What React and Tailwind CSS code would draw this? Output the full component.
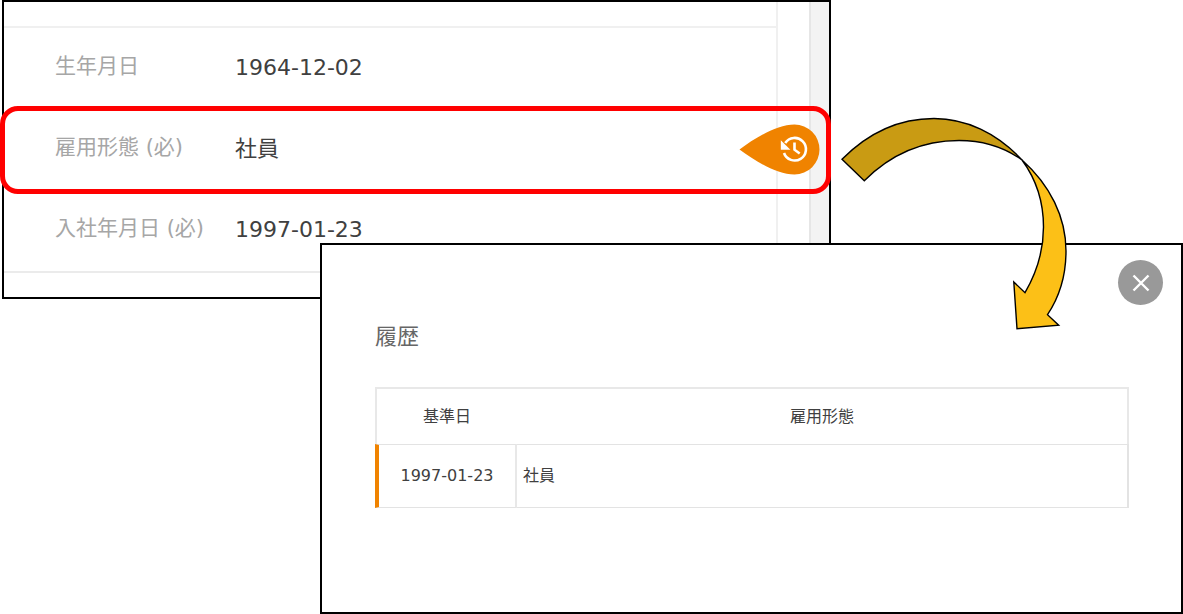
import React from 'react';

const profileRows = [
  { label: '生年月日', value: '1964-12-02' },
  { label: '雇用形態 (必)', value: '社員' },
  { label: '入社年月日 (必)', value: '1997-01-23' },
];

const historyRows = [{ date: '1997-01-23', type: '社員' }];

const HistoryPin = () => (
  <button
    type="button"
    aria-label="履歴を表示"
    className="absolute right-[9px] top-[122px] cursor-pointer"
  >
    <svg width="81" height="51" viewBox="0 0 81 51" fill="none">
      <path
        d="M.5 25.5C16 14 38 .5 55.5 .5a25 25 0 0 1 0 50C38 50.5 16 37 .5 25.5z"
        fill="#f08300"
      />
      <path d="M46.2 19a11.3 11.3 0 1 1-1.2 10" stroke="#fff" strokeWidth="2.6" />
      <path d="M41.8 16.2v9.6h9.6z" fill="#fff" />
      <path d="M55.5 18.5v7.2l5.2 3.8" stroke="#fff" strokeWidth="2.6" />
    </svg>
  </button>
);

const Profile = () => (
  <section className="relative ml-[2px] mr-[352px] flex border-2 border-black bg-white">
    <div className="flex-1 border-r-2 border-[#f0f0f0]">
      <div className="h-[26px] border-b-2 border-[#f0f0f0]" />
      <dl className="border-b-2 border-[#ebebeb]">
        {profileRows.map((row) => (
          <div key={row.label} className="flex h-[81px] items-center pb-[3px] pl-[51px]">
            <dt className="w-[180px] text-[21px] text-[#a6a6a6]">{row.label}</dt>
            <dd className="text-[22px] text-[#404040]">{row.value}</dd>
          </div>
        ))}
      </dl>
      <div className="h-6" />
    </div>
    <div className="ml-[31px] w-5 border-l-2 border-[#e6e6e6] bg-[#f3f3f3]" />

    {/* highlighted row */}
    <div className="absolute -left-[4px] -right-[2px] top-[104px] h-[88px] rounded-[18px] border-[5px] border-[#ff0000]" />
    <HistoryPin />
  </section>
);

const HistoryDialog = () => (
  <section
    role="dialog"
    aria-labelledby="history-title"
    className="relative -mt-14 ml-80 border-2 border-black bg-white pb-[104px]"
  >
    <div className="flex justify-end pr-[18px] pt-[15px]">
      <button
        type="button"
        aria-label="閉じる"
        className="flex h-[45px] w-[45px] cursor-pointer items-center justify-center rounded-full bg-[#999]"
      >
        <svg width="18" height="18" viewBox="0 0 18 18" stroke="#fff" strokeWidth="2.4">
          <path d="M1.5 1.5l15 15M16.5 1.5l-15 15" />
        </svg>
      </button>
    </div>
    <div className="pl-[53px] pr-[52px] pt-4">
      <h2 id="history-title" className="text-[22px] leading-8 text-[#666]">
        履歴
      </h2>
      <table className="mt-[34px] w-full table-fixed border-separate border-spacing-0 text-[16px] text-[#404040]">
        <thead>
          <tr className="h-[57px]">
            <th className="w-[142px] border-l-2 border-t-2 border-[#e8e8e8] font-normal">
              基準日
            </th>
            <th className="border-r-2 border-t-2 border-[#e8e8e8] font-normal">雇用形態</th>
          </tr>
        </thead>
        <tbody>
          {historyRows.map((row) => (
            <tr key={row.date} className="h-16">
              <td className="border-y border-l-4 border-r-2 border-y-[#e3e3e3] border-l-[#f08300] border-r-[#e8e8e8] text-center">
                {row.date}
              </td>
              <td className="border-y border-r-2 border-[#e3e3e3] pl-[6px]">{row.type}</td>
            </tr>
          ))}
        </tbody>
      </table>
    </div>
  </section>
);

const CurvedArrow = () => (
  <svg
    className="pointer-events-none absolute right-[111px] top-[112px]"
    width="236"
    height="224"
    viewBox="836 112 236 224"
    stroke="#000"
    strokeWidth="1.4"
  >
    <path
      d="M842 159.3C868 133 900 118.5 934 118.5C966 118.5 997 133 1022 160C1004 147 983 140.5 959 140.5C924 140.5 891 154 864.3 180.7z"
      fill="#c99b13"
    />
    <path
      d="M1022 160C1050 185 1066 217 1066 251C1066 274 1060 296 1047.5 314.7L1058.7 325.3L1017 328.7L1013.8 282L1025 292.7C1037 272 1043.5 250 1043.5 227C1043.5 202 1036 179 1022 160z"
      fill="#fcc017"
    />
  </svg>
);

const App = () => (
  <main className="relative min-w-[900px] bg-white font-['DejaVu_Sans','Noto_Sans_CJK_JP',sans-serif]">
    <Profile />
    <HistoryDialog />
    <CurvedArrow />
  </main>
);

export default App;
